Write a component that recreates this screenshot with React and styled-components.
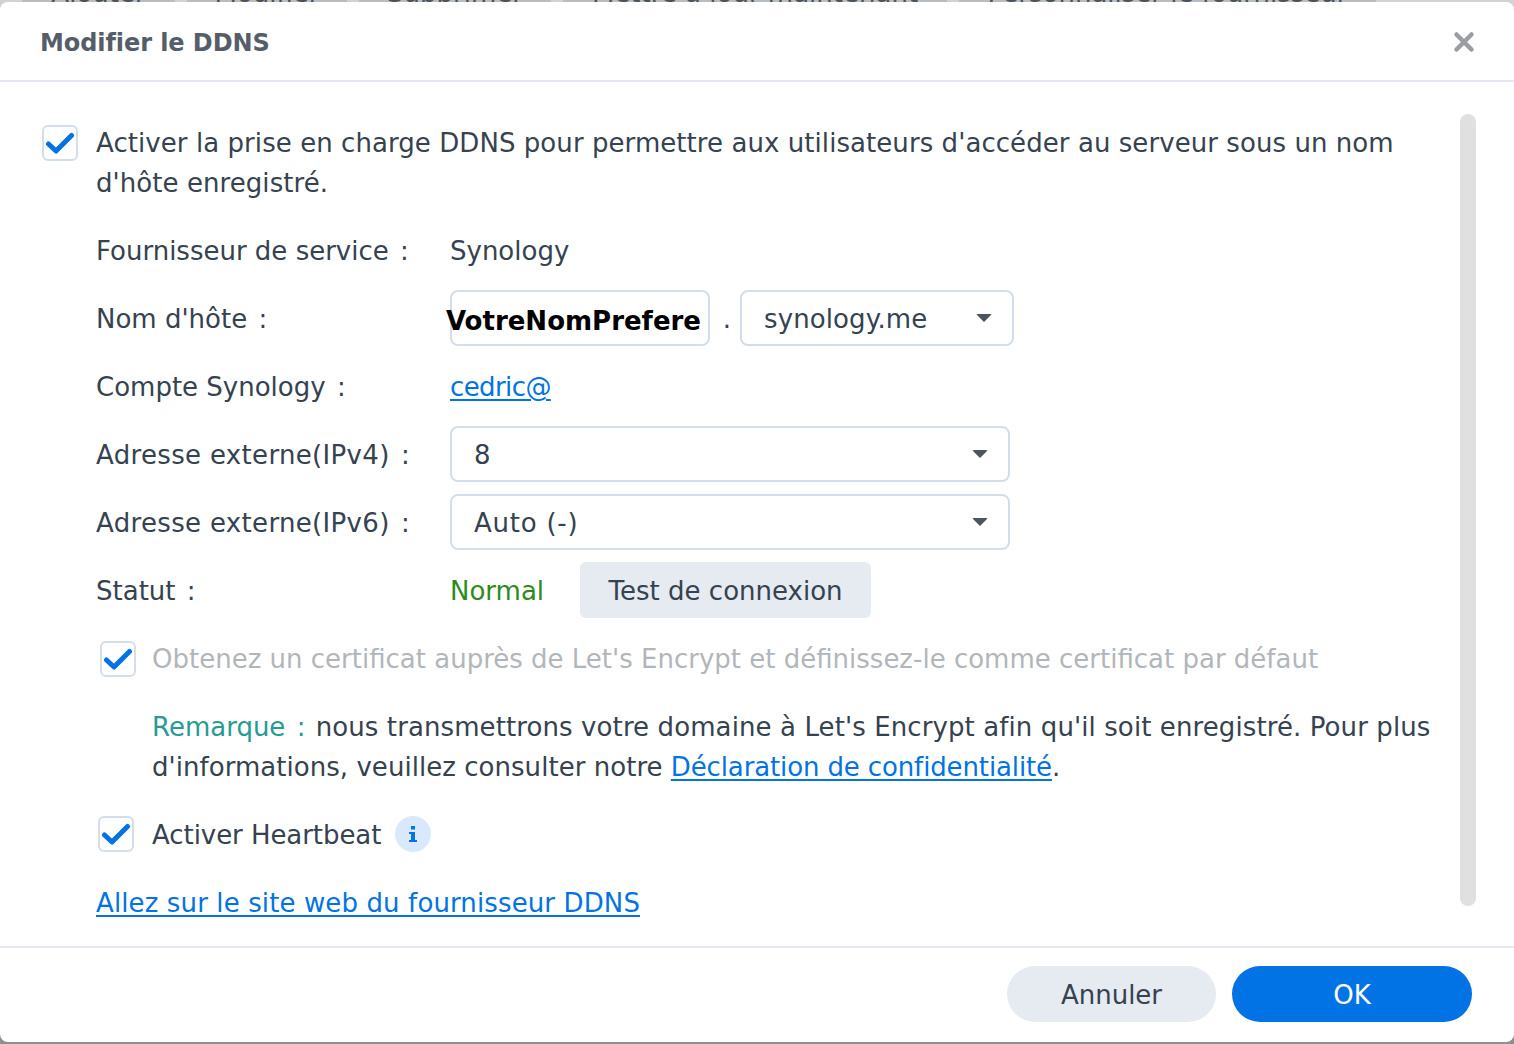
import React from 'react';
import styled, { createGlobalStyle } from 'styled-components';
import { X } from 'lucide-react';

const GlobalStyle = createGlobalStyle`
  html, body {
    margin: 0;
    padding: 0;
    background: #8f8f8f;
  }
  body {
    font-family: "DejaVu Sans", Verdana, sans-serif;
    color: #354250;
  }
`;

const Screen = styled.div`
  width: 1514px;
  height: 1044px;
  overflow: hidden;
  display: flex;
  flex-direction: column;
  background: linear-gradient(#d2d2d2 50%, #8f8f8f 50%);
`;

// strip of the page behind the dialog, only the bottom of its toolbar shows
const BackStrip = styled.div`
  height: 2px;
  flex: none;
  overflow: hidden;
  background: #d2d2d2;
  display: flex;
  gap: 12px;
  padding-left: 22px;
`;

const BackButton = styled.div`
  height: 2px;
  width: ${(p) => p.$w}px;
  flex: none;
  background: #b9bdc1;
  display: flex;
  align-items: flex-end;
  justify-content: center;
  font-size: 26px;
  line-height: 18px;
  color: #4c5257;
  white-space: nowrap;
`;

const Dialog = styled.div`
  width: 1514px;
  height: 1040px;
  flex: none;
  background: #fff;
  border-radius: 8px;
  display: flex;
  flex-direction: column;
`;

const Header = styled.header`
  height: 80px;
  flex: none;
  box-sizing: border-box;
  border-bottom: 2px solid #e3e8f1;
  display: flex;
  align-items: center;
  justify-content: space-between;
  padding: 1px 35px 0 40px;
`;

const Title = styled.h1`
  margin: 0;
  padding-top: 2px;
  font-size: 24px;
  font-weight: 700;
  letter-spacing: -0.08px;
  color: #555e68;
`;

const Close = styled.span`
  display: flex;
  color: #9a9ea3;
`;

const Body = styled.div`
  flex: 1;
  display: flex;
  min-height: 0;
  padding: 32px 38px 0 42px;
  box-sizing: border-box;
`;

const Content = styled.div`
  flex: 1;
  min-width: 0;
  padding-top: 9px;
  font-size: 26px;
  line-height: 40px;
`;

const Scrollbar = styled.div`
  width: 16px;
  height: 792px;
  flex: none;
  border-radius: 8px;
  background: #e0e0e0;
`;

const CheckRow = styled.div`
  display: flex;
  align-items: flex-start;
  gap: ${(p) => p.$gap || 18}px;
  margin: ${(p) => p.$margin || '0'};
  color: ${(p) => (p.$muted ? '#b2b6bb' : 'inherit')};
`;

const Box = styled.span`
  flex: none;
  width: 36px;
  height: 36px;
  margin-top: ${(p) => p.$top ?? 2}px;
  box-sizing: border-box;
  border: 2px solid #d3deea;
  border-radius: 6px;
  background: #fff;
  display: flex;
  align-items: center;
  justify-content: center;
`;

const Form = styled.div`
  margin: 20px 0 0 54px;
  display: flex;
  flex-direction: column;
  gap: 12px;
`;

const FormRow = styled.div`
  display: grid;
  grid-template-columns: 354px 1fr;
  align-items: center;
  min-height: 56px;
`;

// the reference's font is a little wider or narrower than DejaVu, text by text
const Tuned = styled.span`
  letter-spacing: ${(p) => p.$ls}px;
`;

const Colon = styled.span`
  margin: 0 ${(p) => p.$after || 0}px 0 3px;
`;

const Field = styled.div`
  display: flex;
  align-items: center;
  gap: ${(p) => p.$gap || 0}px;
`;

const TextBox = styled.div`
  width: 260px;
  height: 56px;
  margin: -1px 0 1px;
  box-sizing: border-box;
  border: 2px solid #d3deea;
  border-radius: 8px;
  display: flex;
  align-items: center;
  justify-content: flex-end;
  padding: 5px 7px 0 0;
  font-size: 26px;
  font-weight: 700;
  color: #000;
  white-space: nowrap;
`;

const Dot = styled.span`
  width: 30px;
  padding-left: 4px;
  box-sizing: border-box;
  text-align: center;
`;

const Select = styled.div`
  width: ${(p) => p.$w}px;
  height: 56px;
  margin: -1px 0 1px;
  box-sizing: border-box;
  border: 2px solid #d3deea;
  border-radius: 8px;
  display: flex;
  align-items: center;
  justify-content: space-between;
  padding: 2px 20px 0 22px;
`;

const Caret = styled.span`
  width: 0;
  height: 0;
  margin-top: -2px;
  border-left: 8px solid transparent;
  border-right: 8px solid transparent;
  border-top: 8px solid #4a5560;
  border-radius: 2px;
`;

const Link = styled.a`
  color: #0273e4;
  text-decoration: underline;
  text-underline-offset: 3px;
  letter-spacing: ${(p) => p.$ls || 0}px;
`;

const Status = styled.span`
  color: #2b8c1c;
`;

const SmallButton = styled.div`
  height: 56px;
  width: 291px;
  margin: -1px 0 1px;
  padding-top: 2px;
  box-sizing: border-box;
  border-radius: 6px;
  background: #e6eaf1;
  display: flex;
  align-items: center;
  justify-content: center;
`;

const Note = styled.p`
  margin: 28px 0 0 110px;
`;

const NoteTag = styled.span`
  color: #259b94;
`;

const InfoBadge = styled.span`
  width: 36px;
  height: 36px;
  border-radius: 50%;
  background: #d9e9fb;
  margin: 1px 0 0 -4px;
  display: flex;
  align-items: center;
  justify-content: center;
`;

const FooterLink = styled.div`
  margin: 28px 0 0 54px;
`;

const Footer = styled.footer`
  height: 96px;
  flex: none;
  box-sizing: border-box;
  border-top: 2px solid #e3e8f1;
  display: flex;
  justify-content: flex-end;
  align-items: flex-start;
  gap: 16px;
  padding: 18px 42px 0 0;
`;

const Pill = styled.div`
  width: ${(p) => p.$w}px;
  height: 56px;
  padding-top: 2px;
  box-sizing: border-box;
  border-radius: 28px;
  background: ${(p) => (p.$primary ? '#0273e4' : '#e6eaf1')};
  color: ${(p) => (p.$primary ? '#fff' : 'inherit')};
  font-size: 26px;
  display: flex;
  align-items: center;
  justify-content: center;
`;

const Tick = () => (
  <svg width="30" height="24" viewBox="0 0 30 24" fill="none">
    <path d="M3.5 13 L11 20 L26.5 4.5" stroke="#0273e4" strokeWidth="5" strokeLinecap="round" strokeLinejoin="round" />
  </svg>
);

const InfoIcon = () => (
  <svg width="10" height="16" viewBox="0 0 10 16" fill="#0273e4">
    <rect x="3" y="0" width="4" height="3.5" />
    <path d="M1 6h6v8h2v2H1v-2h2V8H1z" />
  </svg>
);

const Check = ({ top }) => (
  <Box $top={top}>
    <Tick />
  </Box>
);

const App = () => (
  <Screen>
    <GlobalStyle />
    <BackStrip>
      <BackButton $w={153}>Ajouter</BackButton>
      <BackButton $w={160}>Modifier</BackButton>
      <BackButton $w={192}>Supprimer</BackButton>
      <BackButton $w={384}>Mettre à jour maintenant</BackButton>
      <BackButton $w={417}>Personnaliser le fournisseur</BackButton>
    </BackStrip>
    <Dialog>
      <Header>
        <Title>Modifier le DDNS</Title>
        <Close>
          <X size={30} strokeWidth={3.6} />
        </Close>
      </Header>
      <Body>
        <Content>
          <CheckRow>
            <Check />
            <Tuned $ls={0.065}>
              Activer la prise en charge DDNS pour permettre aux utilisateurs d'accéder au serveur sous un nom d'hôte enregistré.
            </Tuned>
          </CheckRow>
          <Form>
            <FormRow>
              <span>Fournisseur de service <Colon>:</Colon></span>
              <Field>Synology</Field>
            </FormRow>
            <FormRow>
              <span>Nom d'hôte <Colon>:</Colon></span>
              <Field>
                <TextBox>VotreNomPrefere</TextBox>
                <Dot>.</Dot>
                <Select $w={274}>
                  <Tuned $ls={0.1}>synology.me</Tuned>
                  <Caret />
                </Select>
              </Field>
            </FormRow>
            <FormRow>
              <span>Compte Synology <Colon>:</Colon></span>
              <Field>
                <Link href="#" $ls={-0.6}>cedric@</Link>
              </Field>
            </FormRow>
            <FormRow>
              <span><Tuned $ls={0.33}>Adresse externe(IPv4)</Tuned> <Colon>:</Colon></span>
              <Field>
                <Select $w={560}>
                  8
                  <Caret />
                </Select>
              </Field>
            </FormRow>
            <FormRow>
              <span><Tuned $ls={0.33}>Adresse externe(IPv6)</Tuned> <Colon>:</Colon></span>
              <Field>
                <Select $w={560}>
                  <Tuned $ls={0.75}>Auto (-)</Tuned>
                  <Caret />
                </Select>
              </Field>
            </FormRow>
            <FormRow>
              <span>Statut <Colon>:</Colon></span>
              <Field $gap={36}>
                <Status>Normal</Status>
                <SmallButton>Test de connexion</SmallButton>
              </Field>
            </FormRow>
          </Form>
          <CheckRow $muted $gap={16} $margin="20px 0 0 58px">
            <Check />
            <span>Obtenez un certificat auprès de Let's Encrypt et définissez-le comme certificat par défaut</span>
          </CheckRow>
          <Note>
            <NoteTag>Remarque <Colon $after={2}>:</Colon></NoteTag>{' '}
            <Tuned $ls={0.1}>nous transmettrons votre domaine à Let's Encrypt afin qu'il soit enregistré. Pour plus</Tuned>{' '}
            <Tuned $ls={0.04}>d'informations, veuillez consulter notre</Tuned>{' '}
            <Link href="#" $ls={-0.13}>Déclaration de confidentialité</Link>.
          </Note>
          <CheckRow $gap={18} $margin="28px 0 0 56px">
            <Check top={1} />
            <Tuned $ls={-0.06}>Activer Heartbeat</Tuned>
            <InfoBadge>
              <InfoIcon />
            </InfoBadge>
          </CheckRow>
          <FooterLink>
            <Link href="#" $ls={0.12}>Allez sur le site web du fournisseur DDNS</Link>
          </FooterLink>
        </Content>
        <Scrollbar />
      </Body>
      <Footer>
        <Pill $w={209}>Annuler</Pill>
        <Pill $w={240} $primary>OK</Pill>
      </Footer>
    </Dialog>
  </Screen>
);

export default App;
